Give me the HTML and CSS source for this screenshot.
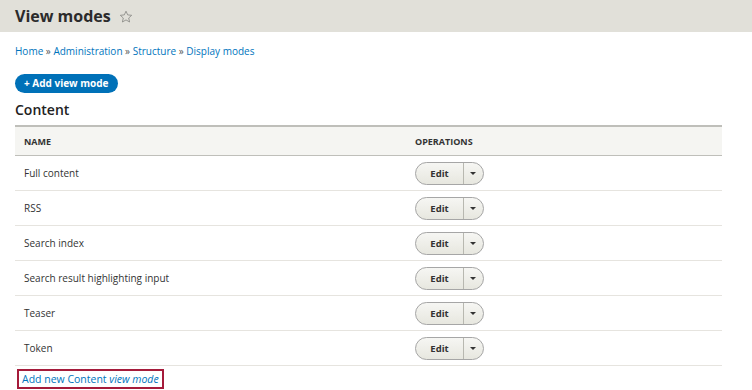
FILE: index.html
```html
<!DOCTYPE html>
<html>
<head>
  <title>View modes</title>
  <link rel="stylesheet" href="styles.css">
</head>
<body>
  <div class="page-header">
    <h1>View modes</h1>
    <svg class="star" width="14" height="14" viewBox="0 0 14 14">
      <path d="M7 1.2l1.7 3.7 4 .4-3 2.7.9 4-3.6-2.1-3.6 2.1.9-4-3-2.7 4-.4z" fill="none" stroke="#8e8e8a" stroke-width="0.9" stroke-linejoin="round"/>
    </svg>
  </div>

  <div class="content">
    <nav class="breadcrumb">
      <a href="#">Home</a> » <a href="#">Administration</a> » <a href="#">Structure</a> » <a href="#">Display modes</a>
    </nav>

    <a href="#" class="add-button">+ Add view mode</a>

    <h2>Content</h2>

    <table class="modes">
      <thead>
        <tr>
          <th class="col-name">Name</th>
          <th>Operations</th>
        </tr>
      </thead>
      <tbody>
        <tr><td>Full content</td><td><div class="dropbutton"><span class="edit">Edit</span><span class="toggle"></span></div></td></tr>
        <tr><td>RSS</td><td><div class="dropbutton"><span class="edit">Edit</span><span class="toggle"></span></div></td></tr>
        <tr><td>Search index</td><td><div class="dropbutton"><span class="edit">Edit</span><span class="toggle"></span></div></td></tr>
        <tr><td>Search result highlighting input</td><td><div class="dropbutton"><span class="edit">Edit</span><span class="toggle"></span></div></td></tr>
        <tr><td>Teaser</td><td><div class="dropbutton"><span class="edit">Edit</span><span class="toggle"></span></div></td></tr>
        <tr><td>Token</td><td><div class="dropbutton"><span class="edit">Edit</span><span class="toggle"></span></div></td></tr>
      </tbody>
    </table>

    <a href="#" class="add-link">Add new Content <em>view mode</em></a>
  </div>
</body>
</html>
```

FILE: styles.css
```css
body {
  margin: 0;
  font-family: 'Open Sans', 'DejaVu Sans', sans-serif;
  color: #222330;
  background: #fff;
}
a {
  color: #0074bd;
  text-decoration: none;
}
.page-header {
  background: #e1e0d9;
  height: 32px;
  padding: 0 15px;
  display: flex;
  align-items: center;
  gap: 8px;
}
h1 {
  margin: 0;
  font-size: 16px;
  font-weight: 700;
  color: #2b2b2b;
}
.star {
  margin-top: 1px;
}
.content {
  padding: 0 30px 0 15px;
}
.breadcrumb {
  margin-top: 12px;
  font-size: 10px;
  color: #555;
}
.add-button {
  display: inline-block;
  margin-top: 16px;
  background: #0071b8;
  color: #fff;
  font-size: 10px;
  font-weight: 700;
  line-height: 19px;
  padding: 0 9px;
  border-radius: 10px;
}
h2 {
  margin: 7px 0 6px;
  font-size: 14px;
  font-weight: 600;
  color: #222;
}
.modes {
  width: 707px;
  border-collapse: collapse;
  font-size: 10px;
}
.modes th {
  background: #f5f5f2;
  border-top: 2px solid #bfbfba;
  border-bottom: 1px solid #bfbfba;
  text-align: left;
  text-transform: uppercase;
  font-size: 9px;
  font-weight: 700;
  color: #333;
  height: 28px;
  padding: 0 9px;
}
.modes th.col-name {
  width: 382px;
}
.modes td {
  height: 34px;
  padding: 0 9px;
  border-bottom: 1px solid #e6e4df;
  color: #333;
}
.modes td + td,
.modes th + th {
  padding-left: 0;
}
.dropbutton {
  display: inline-flex;
  height: 21px;
  border: 1px solid #a6a6a6;
  border-radius: 12px;
  background: linear-gradient(#f6f6f3, #e7e7df);
  overflow: hidden;
}
.dropbutton .edit {
  width: 47px;
  text-align: center;
  line-height: 21px;
  font-size: 9.5px;
  font-weight: 700;
  color: #333;
  border-right: 1px solid #b8b8b0;
}
.dropbutton .toggle {
  width: 19px;
  position: relative;
}
.dropbutton .toggle::after {
  content: "";
  position: absolute;
  left: 6px;
  top: 9px;
  border-left: 3px solid transparent;
  border-right: 3px solid transparent;
  border-top: 3px solid #333;
}
.add-link {
  display: inline-block;
  margin: 3px 0 0 2px;
  border: 2px solid #a51b3a;
  font-size: 10.5px;
  padding: 1px 3px;
  line-height: 14px;
}
```
